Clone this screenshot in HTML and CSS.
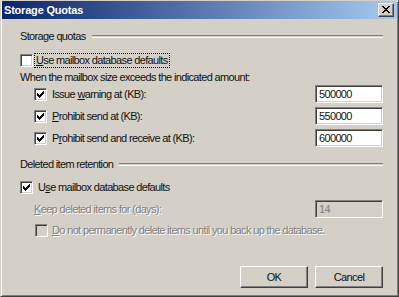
FILE: index.html
```html
<!DOCTYPE html>
<html>
<head>
<meta charset="utf-8">
<link rel="stylesheet" href="styles.css">
</head>
<body>
<div class="window">
  <div class="titlebar">
    <span class="title">Storage Quotas</span>
    <span class="close"><svg width="8" height="7" viewBox="0 0 8 7"><path d="M0 0h2v1h1v1h2V1h1V0h2v1H7v1H6v1H5v1h1v1h1v1h1v1H6V6H5V5H3v1H2v1H0V6h1V5h1V4h1V3H2V2H1V1H0z" fill="#000"/></svg></span>
  </div>
  <div class="content">
    <div class="group-head"><span>Storage quotas</span><span class="rule"></span></div>
    <div class="row cb-row r-top">
      <span class="box"></span>
      <span class="lbl focus"><u>U</u>se mailbox database defaults</span>
    </div>
    <div class="row text-row r-when">When the mailbox size exceeds the indicated amount:</div>
    <div class="quotas">
      <div class="quota">
        <span class="box checked"><svg width="7" height="7" viewBox="0 0 7 7"><path d="M6 0h1v3H6v1H5v1H4v1H3v1H2V6H1V5H0V2h1v1h1v1h1V3h1V2h1V1h1z" fill="#000"/></svg></span>
        <span class="lbl">Issue <u>w</u>arning at (KB):</span>
        <span class="input">500000</span>
      </div>
      <div class="quota">
        <span class="box checked"><svg width="7" height="7" viewBox="0 0 7 7"><path d="M6 0h1v3H6v1H5v1H4v1H3v1H2V6H1V5H0V2h1v1h1v1h1V3h1V2h1V1h1z" fill="#000"/></svg></span>
        <span class="lbl"><u>P</u>rohibit send at (KB):</span>
        <span class="input">550000</span>
      </div>
      <div class="quota">
        <span class="box checked"><svg width="7" height="7" viewBox="0 0 7 7"><path d="M6 0h1v3H6v1H5v1H4v1H3v1H2V6H1V5H0V2h1v1h1v1h1V3h1V2h1V1h1z" fill="#000"/></svg></span>
        <span class="lbl">P<u>r</u>ohibit send and receive at (KB):</span>
        <span class="input">600000</span>
      </div>
    </div>
    <div class="group-head gh2"><span>Deleted item retention</span><span class="rule"></span></div>
    <div class="row cb-row r-use2">
      <span class="box checked"><svg width="7" height="7" viewBox="0 0 7 7"><path d="M6 0h1v3H6v1H5v1H4v1H3v1H2V6H1V5H0V2h1v1h1v1h1V3h1V2h1V1h1z" fill="#000"/></svg></span>
      <span class="lbl lbl2">U<u>s</u>e mailbox database defaults</span>
    </div>
    <div class="keep">
      <span class="lbl disabled"><u>K</u>eep deleted items for (days):</span>
      <span class="input disabled-input">14</span>
    </div>
    <div class="row cb-row r-donot">
      <span class="box disabled-box"></span>
      <span class="lbl disabled"><u>D</u>o not permanently delete items until you back up the database.</span>
    </div>
    <div class="buttons">
      <span class="button">OK</span>
      <span class="button">Cancel</span>
    </div>
  </div>
</div>
</body>
</html>
```
FILE: styles.css
```css
html, body {
  margin: 0;
  padding: 0;
  background: #d4d0c8;
}
.window {
  width: 399px;
  height: 297px;
  box-sizing: border-box;
  background: #d4d0c8;
  border: 1px solid;
  border-color: #d4d0c8 #404040 #404040 #d4d0c8;
  box-shadow: inset 1px 1px #ffffff, inset -1px -1px #808080;
  padding: 0 1px 1px 1px;
  display: flex;
  flex-direction: column;
  font-family: "Liberation Sans", Arial, sans-serif;
  font-size: 11px;
  letter-spacing: -0.65px;
  color: #111;
}
.titlebar {
  height: 18px;
  flex: none;
  background: linear-gradient(to right, #0a246a, #a6caf0);
  display: flex;
  align-items: center;
  justify-content: space-between;
  padding: 0 3px 0 2px;
}
.title {
  color: #fff;
  font-weight: bold;
  font-size: 11px;
  letter-spacing: -0.2px;
}
.close {
  width: 16px;
  height: 14px;
  box-sizing: border-box;
  background: #d4d0c8;
  border: 1px solid;
  border-color: #fff #404040 #404040 #fff;
  box-shadow: inset -1px -1px #808080;
  display: flex;
  align-items: center;
  justify-content: center;
  padding: 0 1px 1px 0;
}
.close svg { display: block; }
.content {
  flex: 1;
  display: flex;
  flex-direction: column;
  padding: 10px 14px 7px 18px;
}
.group-head {
  height: 14px;
  display: flex;
  align-items: center;
  gap: 6px;
  flex: none;
}
.rule {
  flex: 1;
  height: 1px;
  border-top: 1px solid #808080;
  border-bottom: 1px solid #fff;
}
.row {
  display: flex;
  align-items: center;
  flex: none;
  height: 14px;
}
.r-top { margin-top: 10px; }
.r-when { margin-top: 3px; }
.box {
  width: 13px;
  height: 13px;
  box-sizing: border-box;
  background: #fff;
  border: 1px solid;
  border-color: #808080 #fff #fff #808080;
  box-shadow: inset 1px 1px #404040, inset -1px -1px #d4d0c8;
  display: flex;
  align-items: center;
  justify-content: center;
  flex: none;
}
.box svg { display: block; }
.disabled-box { background: #d4d0c8; }
.lbl { white-space: nowrap; }
.cb-row .lbl { margin-left: 4px; }
.cb-row .lbl2 { margin-left: 5px; }
.focus {
  outline: 1px dotted #000;
  outline-offset: 0;
  padding: 0 1px;
  margin-left: 2px !important;
  line-height: 13px;
}
.quotas {
  margin-top: 1px;
  display: flex;
  flex-direction: column;
  gap: 4px;
  padding-left: 14px;
}
.quota {
  display: flex;
  align-items: center;
  height: 18px;
}
.quota .lbl { margin-left: 5px; flex: 1; }
.input {
  width: 68px;
  height: 18px;
  box-sizing: border-box;
  background: #fff;
  border: 1px solid;
  border-color: #808080 #fff #fff #808080;
  box-shadow: inset 1px 1px #404040, inset -1px -1px #d4d0c8;
  padding: 0 3px;
  line-height: 16px;
  flex: none;
}
.disabled-input {
  background: #d4d0c8;
  color: #808080;
}
.gh2 { margin-top: 10px; }
.r-use2 { margin-top: 9px; }
.keep {
  margin-top: 6px;
  display: flex;
  align-items: center;
  justify-content: space-between;
  height: 18px;
  padding-left: 14px;
}
.r-donot { margin-top: 5px; padding-left: 15px; }
.disabled {
  color: #808080;
  text-shadow: 1px 1px #fff;
}
.buttons {
  margin-top: auto;
  display: flex;
  justify-content: flex-end;
  gap: 7px;
}
.button {
  width: 68px;
  height: 22px;
  box-sizing: border-box;
  border: 1px solid;
  border-color: #fff #404040 #404040 #fff;
  box-shadow: inset -1px -1px #808080;
  display: flex;
  align-items: center;
  justify-content: center;
}
```
